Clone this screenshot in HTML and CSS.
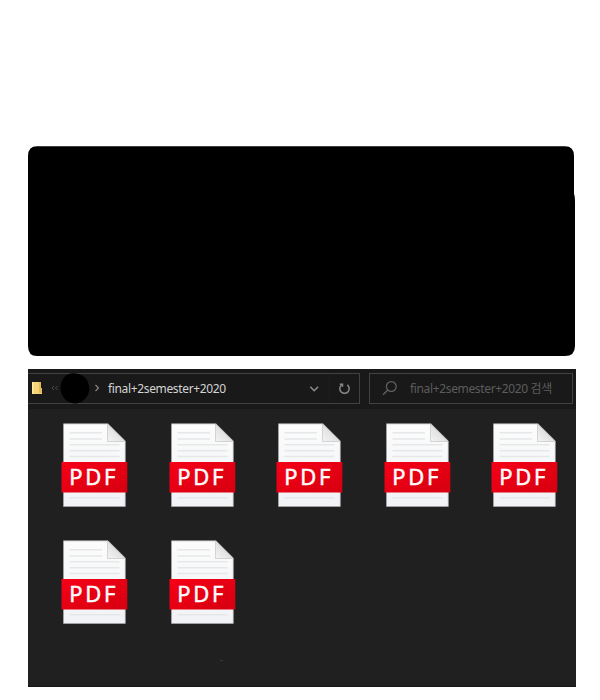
FILE: index.html
```
<!DOCTYPE html>
<html lang="ko">
<head>
<meta charset="utf-8">
<title>final+2semester+2020</title>
<link rel="stylesheet" href="styles.css">
</head>
<body>
<main class="page">
  <svg class="panel" viewBox="0 0 548 211">
    <path d="M9 .3H537Q546 .3 546 10V48Q547 50 547 56V200Q547 210 537 210H9Q0 210 0 200V10Q0 .3 9 .3Z"/>
  </svg>
  <section class="window">
    <header class="toolbar">
      <div class="address">
        <svg class="crumbs" viewBox="0 0 80 29">
          <path d="M4 8H11V13L14 15V20H4Z" fill="#f3d477"/>
          <path d="M11 8H13V14H14V19H11Z" fill="#e3b95c"/>
          <path d="M4 8H5.500V20H4Z" fill="#ffe9a0"/>
          <path d="M26 12L24 14L26 16M29.500 12L27.500 14L29.500 16" fill="none" stroke="#4a4a4a"/>
          <path d="M45 -.8C54 -.8 60 4 61 12C63 21 55 29.500 47 29.500C38 29.500 32 21 32.500 13C33 5 38 -.8 45 -.8Z"/>
          <path d="M67.500 11L70.500 14L67.500 17" fill="none" stroke="#8a8a8a" stroke-width="1.100"/>
        </svg>
        <span class="path">final+2semester+2020</span>
        <svg class="controls" viewBox="0 0 60 29">
          <path d="M11.300 12.800L15.200 16.700L19.100 12.800" fill="none" stroke="#909090" stroke-width="1.400"/>
          <path d="M30 0V29" stroke="#1f1f1f"/>
          <path d="M42.300 11.200A4.700 4.700 0 1 0 48.300 10.900M40.800 10.200H43.500V12.800" fill="none" stroke="#898989" stroke-width="1.500"/>
        </svg>
      </div>
      <div class="search">
        <svg class="lens" viewBox="0 0 40 29">
          <circle cx="21.300" cy="12.500" r="4.900" fill="none" stroke="#626262" stroke-width="1.200"/>
          <path d="M17.800 16L13 20.700" stroke="#626262" stroke-width="1.300"/>
        </svg>
        <span class="query">final+2semester+2020 <span class="ko">검색</span></span>
      </div>
    </header>
    <div class="files">
      <svg class="file" viewBox="0 0 68 85"><use href="#pdf"/><text x="8.300" y="62">PDF</text></svg>
      <svg class="file" viewBox="0 0 68 85"><use href="#pdf"/><text x="8.300" y="62">PDF</text></svg>
      <svg class="file" viewBox="0 0 68 85"><use href="#pdf"/><text x="8.300" y="62">PDF</text></svg>
      <svg class="file" viewBox="0 0 68 85"><use href="#pdf"/><text x="8.300" y="62">PDF</text></svg>
      <svg class="file" viewBox="0 0 68 85"><use href="#pdf"/><text x="8.300" y="62">PDF</text></svg>
      <svg class="file" viewBox="0 0 68 85"><use href="#pdf"/><text x="8.300" y="62">PDF</text></svg>
      <svg class="file" viewBox="0 0 68 85"><use href="#pdf"/><text x="8.300" y="62">PDF</text></svg>
    </div>
    <i class="speck"></i>
  </section>
</main>
<svg class="defs">
  <defs>
    <linearGradient id="paper" x1="0" y1="0" x2="0" y2="1"><stop offset="0" stop-color="#fcfcfc"/><stop offset="1" stop-color="#f0f2f5"/></linearGradient>
    <linearGradient id="fold" x1="0" y1="1" x2="1" y2="0"><stop offset="0" stop-color="#f4f4f4"/><stop offset="1" stop-color="#cfcfcf"/></linearGradient>
    <linearGradient id="band" x1="0" y1="0" x2="1" y2="1"><stop offset="0" stop-color="#f60017"/><stop offset="1" stop-color="#d60010"/></linearGradient>
    <g id="pdf">
      <path d="M2.500 .8H47L64.300 18V83.500H2.500Z" fill="url(#paper)" stroke="#aaaaac" stroke-width=".7"/>
      <path d="M8.500 9.700H41M8.500 16H41M8.500 21.800H58.500M8.500 27.700H58.500M8.500 33.500H58.500M8.500 74.700H58.500" stroke="#e5e7e9" stroke-width="1.400"/>
      <path d="M46.500 1V18.500H64.200Z" fill="url(#fold)" stroke="#bdbdbd" stroke-width=".6"/>
      <path d="M.5 39H66.300V69.500H.5Z" fill="url(#band)"/>
    </g>
  </defs>
</svg>
</body>
</html>
```
FILE: styles.css
```
* { box-sizing: border-box; }
body { margin: 0; background: #fff; font-family: "Noto Sans", "Noto Sans CJK KR", sans-serif; }
svg { display: block; flex: none; }
.page { width: 600px; height: 700px; padding: 146px 24px 0 28px; }
.panel { width: 548px; height: 211px; }
.window { position: relative; width: 548px; height: 318px; margin-top: 12px; background: #202020; border-bottom: 1px solid #17131a; }
.toolbar { display: flex; gap: 9px; height: 40px; padding: 4px 3px 0 0; background: #191919; }
.address, .search { display: flex; flex: none; align-items: center; height: 31px; border: 1px solid #424242; white-space: nowrap; }
.address { width: 332px; border-left: 0; }
.search { width: 204px; }
.crumbs { width: 80px; height: 29px; overflow: visible; }
.path { flex: 1; color: #d4d4d4; font-size: 12px; letter-spacing: -0.35px; }
.controls { width: 60px; height: 29px; }
.lens { width: 40px; height: 29px; }
.query { color: #5c5c5c; font-size: 12px; line-height: 17px; letter-spacing: -0.35px; }
.ko { font-family: "Noto Sans CJK KR", sans-serif; line-height: 1; }
.files { display: grid; grid-template-columns: repeat(5, 68px); column-gap: 39.6px; row-gap: 32px; padding: 14px 0 0 33px; }
.file { width: 68px; height: 85px; }
.file text { fill: #fff; stroke: #fff; stroke-width: 0.6px; font: 400 22px "Open Sans", sans-serif; letter-spacing: 2.8px; }
.speck { position: absolute; left: 192px; top: 291px; width: 3px; height: 1px; background: #393939; }
.defs { position: absolute; width: 0; height: 0; }
```
